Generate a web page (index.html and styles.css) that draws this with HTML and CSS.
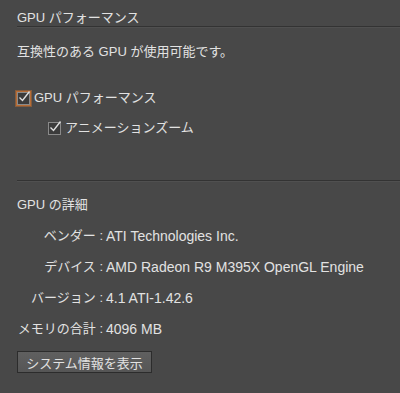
FILE: index.html
```html
<!DOCTYPE html>
<html lang="ja">
<head>
  <meta charset="UTF-8">
  <title>GPU パフォーマンス</title>
  <link rel="stylesheet" href="styles.css">
</head>
<body>
  <div class="panel">
    <div class="title">GPU パフォーマンス</div>
    <div class="rule"></div>

    <div class="desc">互換性のある GPU が使用可能です。</div>

    <label class="check focus">
      <span class="box"><svg viewBox="0 0 14 14" width="14" height="14"><path d="M2.5 7.5 L5.5 10.5 L12.5 1.5" fill="none" stroke="#e0e0e0" stroke-width="1.4"/></svg></span>
      GPU パフォーマンス
    </label>
    <label class="check sub">
      <span class="box"><svg viewBox="0 0 14 14" width="14" height="14"><path d="M2.5 7.5 L5.5 10.5 L12.5 1.5" fill="none" stroke="#e0e0e0" stroke-width="1.4"/></svg></span>
      アニメーションズーム
    </label>

    <div class="rule low"></div>

    <div class="subtitle">GPU の詳細</div>

    <div class="details">
      <div class="key">ベンダー :</div><div class="val">ATI Technologies Inc.</div>
      <div class="key">デバイス :</div><div class="val">AMD Radeon R9 M395X OpenGL Engine</div>
      <div class="key">バージョン :</div><div class="val">4.1 ATI-1.42.6</div>
      <div class="key">メモリの合計 :</div><div class="val">4096 MB</div>
    </div>

    <button class="btn">システム情報を表示</button>
  </div>
</body>
</html>
```

FILE: styles.css
```css
body {
  margin: 0;
  background: #484848;
  color: #e2e2e2;
  font-family: "Liberation Sans", "Noto Sans CJK JP", sans-serif;
  font-size: 13px;
}

.panel {
  padding-left: 17px;
}

.title {
  padding-top: 10px;
  line-height: 16px;
}

.rule {
  margin-top: 0;
  height: 1px;
  background: #333;
  border-bottom: 1px solid #505050;
}

.rule.low {
  margin-top: 44px;
}

.desc {
  margin-top: 16px;
  line-height: 16px;
}

.check {
  display: flex;
  align-items: center;
  line-height: 16px;
  margin-top: 30px;
}

.check.sub {
  margin-top: 14px;
  padding-left: 31px;
}

.box {
  position: relative;
  width: 11px;
  height: 11px;
  border: 1px solid #8a8a8a;
  background: #3b3b3b;
  margin-right: 4px;
  flex-shrink: 0;
}

.box svg {
  position: absolute;
  left: -1px;
  top: -3px;
}

.check.focus .box {
  box-shadow: 0 0 0 1px #b86c34, 0 0 0 2px rgba(190, 110, 50, 0.5);
}

.subtitle {
  margin-top: 15px;
  line-height: 16px;
}

.details {
  display: grid;
  grid-template-columns: 86px auto;
  row-gap: 15px;
  margin-top: 15px;
  line-height: 16px;
}

.key {
  text-align: right;
  white-space: nowrap;
}

.val {
  padding-left: 3px;
  font-size: 14px;
  white-space: nowrap;
}

.btn {
  display: block;
  margin-top: 14px;
  width: 135px;
  height: 22px;
  padding: 0;
  background: linear-gradient(#606060, #565656);
  border: 1px solid #2c2c2c;
  color: #e2e2e2;
  font-family: inherit;
  font-size: 13px;
}
```
